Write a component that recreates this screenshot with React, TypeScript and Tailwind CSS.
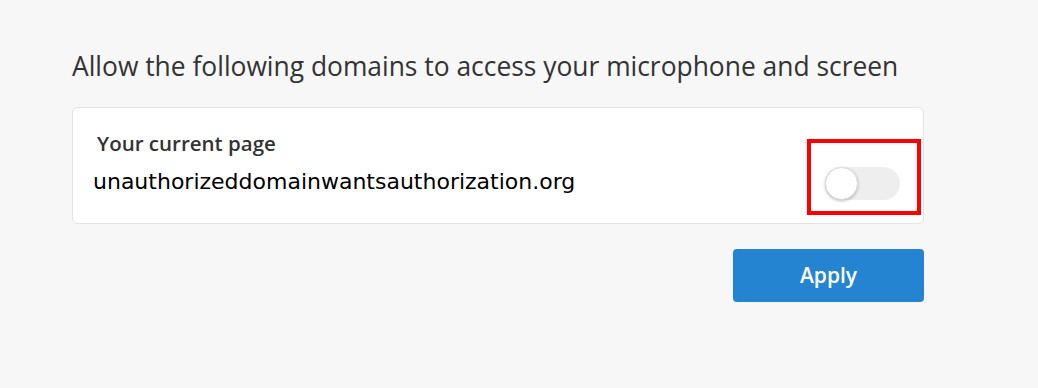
export default function App() {
  return (
    <div className="h-[388px] w-[1038px] bg-[#f7f7f7] pl-[72px] pt-[48px] font-['DejaVu_Sans',sans-serif]">
      <div className="w-[852px]">
        <h2 className="font-['Open_Sans',sans-serif] text-[26.4px] leading-[36px] text-[#333]">
          Allow the following domains to access your microphone and screen
        </h2>

        <div className="mt-[23px] flex h-[117px] items-start justify-between rounded-[6px] border border-[#e4e4e4] bg-white">
          <div className="pl-[20px] pt-[21px]">
            <div className="ml-[4px] font-['Open_Sans',sans-serif] text-[20.5px] font-semibold leading-[28px] text-[#333]">
              Your current page
            </div>
            <div className="mt-[11px] text-[22px] leading-[28px] text-black">
              unauthorizeddomainwantsauthorization.org
            </div>
          </div>

          {/* annotation box round the toggle */}
          <div className="mr-[2px] mt-[31px] border-4 border-[#ff0000] pb-[11px] pl-[14px] pr-[17px] pt-[24px]">
            <button
              type="button"
              className="relative flex h-[33px] w-[75px] items-center rounded-full bg-[#eeeeee]"
            >
              <span className="h-[33px] w-[33px] rounded-full border border-[#dcdcdc] bg-white shadow-[0_1px_3px_rgba(0,0,0,0.25)]" />
            </button>
          </div>
        </div>

        <div className="mt-[25px] flex justify-end">
          <button
            type="button"
            className="h-[53px] w-[191px] rounded-[4px] bg-[#2484d1] font-['Open_Sans',sans-serif] text-[21px] font-semibold text-white"
          >
            Apply
          </button>
        </div>
      </div>
    </div>
  );
}
